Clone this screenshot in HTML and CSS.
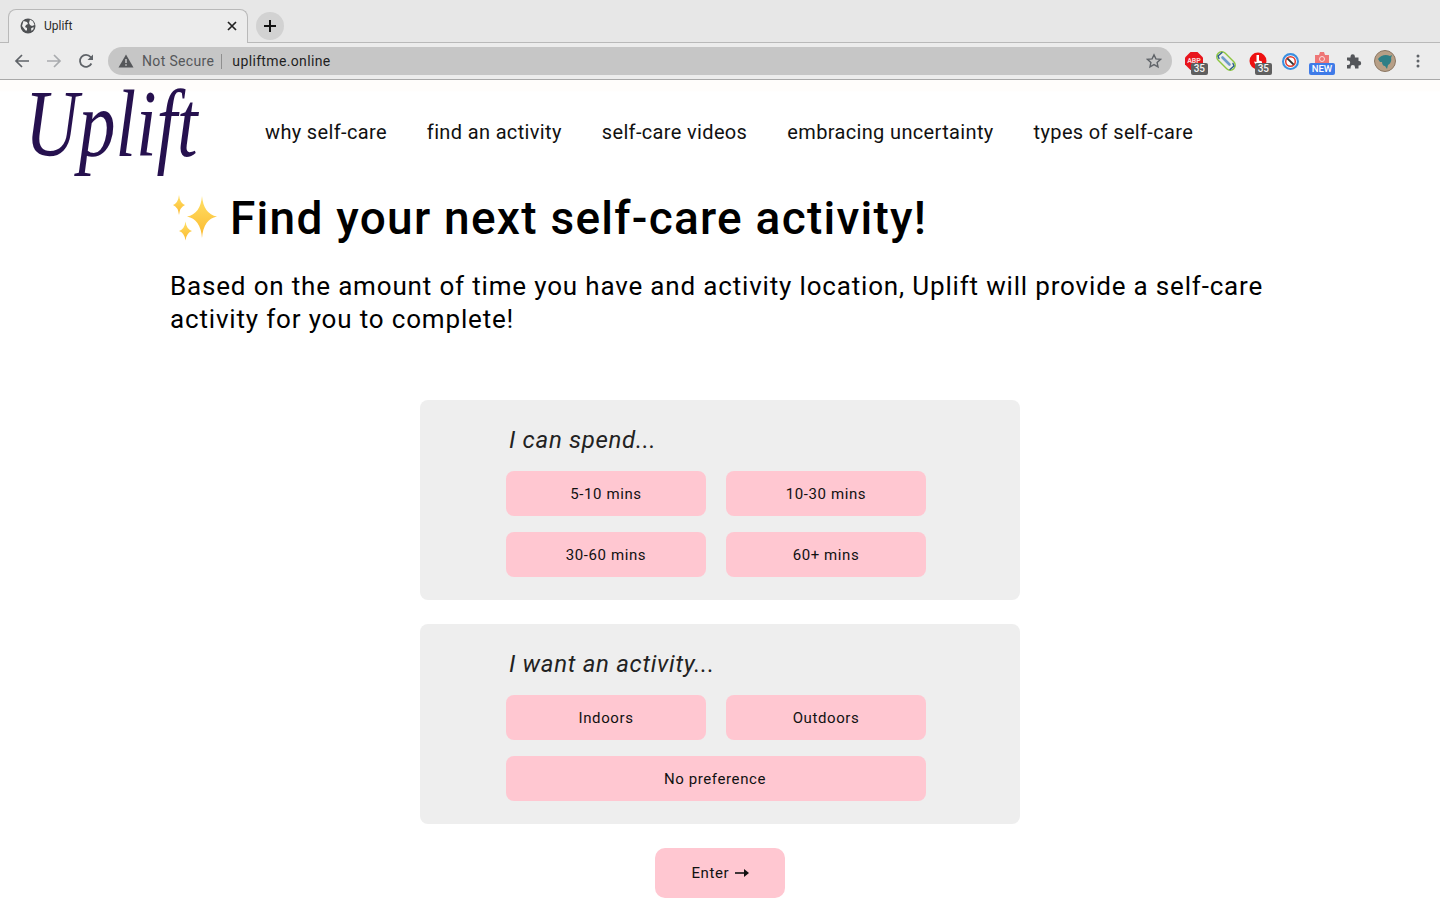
FILE: index.html
```html
<!DOCTYPE html>
<html lang="en">
<head>
    <meta charset="UTF-8">
    <meta name="viewport" content="width=device-width, initial-scale=1.0">
    <title>Uplift</title>
    <link rel="stylesheet" href="styles.css">
</head>

<body>
    <!-- browser window top -->
    <div class="tab-strip">
        <div class="tab">
            <svg class="tab-globe" width="16" height="16" viewBox="0 0 16 16">
                <circle cx="8" cy="8" r="7.500" fill="#4f5154"/>
                <path d="M3.500 3l3.500 1 1 2-2 1-1 2 2 1 0 2.500-1.500 0-3.500-4.500zM10 1.500l3 2 1.500 3.500-2.500 1-2-1-1-2zM11 10.500l2.500-1.500 0 2-2 2z" fill="#eeeeee"/>
            </svg>
            <span class="tab-title">Uplift</span>
            <svg class="tab-close" width="10" height="10" viewBox="0 0 10 10">
                <path d="M1 1l8 8M9 1l-8 8" stroke="#222" stroke-width="1.700"/>
            </svg>
        </div>
        <div class="new-tab">
            <svg width="14" height="14" viewBox="0 0 14 14">
                <path d="M7 1v12M1 7h12" stroke="#111" stroke-width="2"/>
            </svg>
        </div>
    </div>
    <div class="toolbar">
        <svg class="nav-icon" width="16" height="16" viewBox="0 0 16 16">
            <path d="M15 8H2M8 2L2 8l6 6" fill="none" stroke="#5f6368" stroke-width="1.700"/>
        </svg>
        <svg class="nav-icon" width="16" height="16" viewBox="0 0 16 16">
            <path d="M1 8h13M8 2l6 6-6 6" fill="none" stroke="#a9abae" stroke-width="1.700"/>
        </svg>
        <svg class="nav-icon" width="16" height="16" viewBox="0 0 16 16">
            <path d="M13.400 10.500A6 6 0 1 1 12.600 4L14 5.600" fill="none" stroke="#5f6368" stroke-width="1.800"/>
            <path d="M15 1.500V7H9.500z" fill="#5f6368"/>
        </svg>
        <div class="omnibox">
            <svg class="warn" width="16" height="14" viewBox="0 0 16 14">
                <path d="M8 0.500L15.500 13.500H0.500z" fill="#55575a"/>
                <path d="M8 5v4M8 10.200v1.600" stroke="#c6c6c6" stroke-width="1.500"/>
            </svg>
            <span class="not-secure">Not Secure</span>
            <span class="url">upliftme.online</span>
            <svg class="star" width="16" height="16" viewBox="0 0 16 16">
                <path d="M8 1.800l1.900 4.100 4.500.5-3.300 3 .9 4.400L8 11.600l-4 2.200.9-4.400-3.300-3 4.500-.5z" fill="none" stroke="#5f6368" stroke-width="1.400"/>
            </svg>
        </div>
        <div class="extensions">
            <div class="ext">
                <svg width="18" height="18" viewBox="0 0 18 18">
                    <path d="M5.500 0h7L18 5.500v7L12.500 18h-7L0 12.500v-7z" fill="#e8141c"/>
                    <text class="abp-text" x="9" y="11">ABP</text>
                </svg>
                <span class="ext-badge">35</span>
            </div>
            <div class="ext">
                <svg width="20" height="20" viewBox="0 0 20 20">
                    <g fill="none" stroke-linecap="round">
                        <rect x="-1" y="5" width="22" height="10" rx="5" stroke="#8cc63f" stroke-width="1.400" transform="rotate(45 10 10)"/>
                        <path d="M6.500 6.500l7 7" stroke="#6d9ccb" stroke-width="2.600"/>
                        <path d="M6 1.500L2 5l1 2.500M14 18.500l4-3.500-1-2.500" stroke="#2c5f8a" stroke-width="1.400"/>
                    </g>
                </svg>
            </div>
            <div class="ext">
                <svg width="18" height="18" viewBox="0 0 18 18">
                    <circle cx="9" cy="9" r="8.500" fill="#ee1111"/>
                    <path d="M7.500 3h2.500v5.500l3 1v4.500h-6l-2-4.500 2.500 .5z" fill="#fff"/>
                </svg>
                <span class="ext-badge">35</span>
            </div>
            <div class="ext">
                <svg width="17" height="17" viewBox="0 0 16 16">
                    <circle cx="8" cy="8" r="7" fill="#fff" stroke="#3b8fe0" stroke-width="2"/>
                    <circle cx="8" cy="8" r="4.500" fill="none" stroke="#e0392b" stroke-width="1.400"/>
                    <path d="M5 5l6 6" stroke="#333" stroke-width="1.800"/>
                </svg>
            </div>
            <div class="ext">
                <svg class="cam" width="18" height="14" viewBox="0 0 18 14">
                    <path d="M2 4h4l1-3h4l1 3h4v10H2z" fill="#ee7676"/>
                    <circle cx="9" cy="8" r="2.500" fill="none" stroke="#fbdcdc" stroke-width="1"/>
                </svg>
                <span class="ext-new">NEW</span>
            </div>
            <div class="ext">
                <svg width="16" height="16" viewBox="0 0 16 16">
                    <path d="M1 4.500h3.500v-1a2.200 2.200 0 0 1 4.400 0v1H12.500V8h.5a2.200 2.200 0 0 1 0 4.400h-.5V15.500H9v-1.300a2.200 2.200 0 0 0-4.400 0v1.300H1V12h1a2.200 2.200 0 0 0 0-4.400H1z" fill="#54565a"/>
                </svg>
            </div>
            <svg class="avatar" width="22" height="22" viewBox="0 0 22 22">
                <circle cx="11" cy="11" r="10.500" fill="#b79f86" stroke="#8b7763"/>
                <path d="M4 9c3-4 8-5 12-3l2-1-1 3c1 3-1 6-3 7l-1 4-2-3c-2 0-3-2-3-4l-2 0z" fill="#2f7f86"/>
            </svg>
            <svg class="menu-dots" width="4" height="14" viewBox="0 0 4 14">
                <circle cx="2" cy="2" r="1.500" fill="#5f6368"/>
                <circle cx="2" cy="7" r="1.500" fill="#5f6368"/>
                <circle cx="2" cy="12" r="1.500" fill="#5f6368"/>
            </svg>
        </div>
    </div>

    <!-- the page itself -->
    <header class="site-header">
        <a class="logo"><span class="logo-text">Uplift</span></a>
        <nav class="site-nav">
            <a>why self-care</a>
            <a>find an activity</a>
            <a>self-care videos</a>
            <a>embracing uncertainty</a>
            <a>types of self-care</a>
        </nav>
    </header>

    <main class="content">
        <h1 class="page-title">
            <svg class="sparkles" width="48" height="46" viewBox="0 0 48 46">
                <defs>
                    <linearGradient id="spark" x1="0" y1="0" x2="0" y2="1">
                        <stop offset="0" stop-color="#ffe066"/>
                        <stop offset="1" stop-color="#fbb92f"/>
                    </linearGradient>
                </defs>
                <path d="M32 1Q33.500 19 47 21.500Q33.500 24 32 43Q30.500 24 17 21.500Q30.500 19 32 1z" fill="url(#spark)"/>
                <path d="M9 0Q9.800 8 15 10Q9.800 12 9 20Q8.200 12 3 10Q8.200 8 9 0z" fill="url(#spark)"/>
                <path d="M15.500 26.500Q16.300 34 22 36Q16.300 38 15.500 45.500Q14.700 38 9 36Q14.700 34 15.500 26.500z" fill="url(#spark)"/>
            </svg>
            <span>Find your next self-care activity!</span>
        </h1>
        <p class="intro">Based on the amount of time you have and activity location, Uplift will provide a self-care activity for you to complete!</p>

        <section class="card">
            <h2 class="card-label">I can spend...</h2>
            <div class="choices">
                <button>5-10 mins</button>
                <button>10-30 mins</button>
                <button>30-60 mins</button>
                <button>60+ mins</button>
            </div>
        </section>

        <section class="card">
            <h2 class="card-label">I want an activity...</h2>
            <div class="choices">
                <button>Indoors</button>
                <button>Outdoors</button>
                <button class="wide">No preference</button>
            </div>
        </section>

        <button class="enter-btn">Enter
            <svg class="enter-arrow" width="14" height="10" viewBox="0 0 14 10">
                <path d="M0 5h10" stroke="#111" stroke-width="1.600"/>
                <path d="M9 1l5 4-5 4z" fill="#111"/>
            </svg>
        </button>
    </main>
</body>
</html>
```

FILE: styles.css
```css
body {
    font-family: "Roboto", "Liberation Sans", sans-serif;
    margin: 0;
    background: white;
    color: black;
    height: 900px;
    overflow: hidden;
}

/* browser window top */
.tab-strip {
    height: 42px;
    background: #e7e7e7;
    border-bottom: 1px solid #b9b9b9;
    display: flex;
    align-items: flex-end;
    padding-left: 8px;
    gap: 8px;
}

.tab {
    width: 240px;
    height: 34px;
    margin-bottom: -1px;
    background: #ececec;
    border: 1px solid #b9b9b9;
    border-bottom: none;
    border-radius: 8px 8px 0 0;
    display: flex;
    align-items: center;
    padding: 0 10px 2px 11px;
    box-sizing: border-box;
    font-size: 12px;
    color: #2b2b2b;
}

.tab-globe {
    margin-right: 8px;
}

.tab-title {
    flex: 1;
}

.new-tab {
    width: 28px;
    height: 28px;
    margin-bottom: 2px;
    border-radius: 50%;
    background: #d2d2d2;
    display: flex;
    align-items: center;
    justify-content: center;
}

.toolbar {
    height: 36px;
    background: #ececec;
    border-bottom: 1px solid #a9a9a9;
    display: flex;
    align-items: center;
    padding-left: 14px;
}

.nav-icon {
    margin-right: 16px;
}

.omnibox {
    width: 1064px;
    height: 28px;
    margin-left: -2px;
    border-radius: 14px;
    background: #c6c6c6;
    display: flex;
    align-items: center;
    padding: 0 10px;
    box-sizing: border-box;
    font-size: 14px;
    letter-spacing: 0.35px;
}

.warn {
    margin-right: 8px;
}

.not-secure {
    color: #55575a;
    padding-right: 7px;
    border-right: 1px solid #8f8f8f;
    line-height: 15px;
}

.url {
    flex: 1;
    color: #1f1f1f;
    padding-left: 10px;
}

.extensions {
    display: flex;
    align-items: center;
    padding-left: 6px;
}

.ext {
    width: 32px;
    height: 24px;
    display: flex;
    align-items: center;
    justify-content: center;
    position: relative;
}

.abp-text {
    font-size: 7px;
    font-weight: 700;
    fill: #f8d8d8;
    text-anchor: middle;
}

.ext-badge {
    position: absolute;
    right: 2px;
    bottom: -2px;
    background: #5f5f5f;
    color: #f2f2f2;
    font-size: 10px;
    font-weight: 500;
    line-height: 12px;
    padding: 0 3px;
    border-radius: 2px;
    letter-spacing: 0;
}

.cam {
    margin-top: -6px;
}

.ext-new {
    position: absolute;
    left: 3px;
    bottom: -2px;
    width: 26px;
    text-align: center;
    background: #3f7be8;
    color: white;
    font-size: 9.500px;
    font-weight: 500;
    line-height: 12px;
    border-radius: 2px;
}

.avatar {
    margin-left: 4px;
}

.menu-dots {
    margin-left: 20px;
}

/* page */
.site-header {
    height: 100px;
    display: flex;
    align-items: flex-start;
    padding-left: 30px;
    background: linear-gradient(#fffdfb 0, #fffdfb 10px, white 12px);
}

.logo {
    width: 170px;
    height: 100px;
    color: #26114f;
}

.logo-text {
    display: block;
    margin-left: -5px;
    font-family: "Liberation Serif", serif;
    font-style: italic;
    font-size: 74px;
    line-height: 92px;
    transform: scaleY(1.300);
    transform-origin: 0 54px;
}

.site-nav {
    display: flex;
    gap: 40px;
    margin-left: 65px;
    padding-top: 39px;
    font-size: 20px;
    line-height: 26px;
    letter-spacing: 0.35px;
    color: #111;
}

.content {
    padding: 12px 170px 0;
}

.page-title {
    margin: 0;
    display: flex;
    align-items: center;
    gap: 12px;
    font-size: 46px;
    font-weight: 500;
    line-height: 52px;
    letter-spacing: 1.250px;
}

.sparkles {
    flex: none;
}

.intro {
    margin: 26px 0 64px;
    font-size: 26px;
    line-height: 33px;
    letter-spacing: 0.83px;
}

.card {
    width: 600px;
    height: 200px;
    margin: 0 auto 24px;
    padding: 24px 94px 0 86px;
    box-sizing: border-box;
    background: #eeeeee;
    border-radius: 8px;
}

.card-label {
    margin: 0 0 15px 3px;
    font-size: 24px;
    font-style: italic;
    font-weight: 400;
    line-height: 32px;
    letter-spacing: 0.7px;
    color: #222;
}

.choices {
    display: grid;
    grid-template-columns: 200px 200px;
    gap: 16px 20px;
}

.choices button {
    height: 45px;
}

button {
    font-family: inherit;
    font-size: 15px;
    letter-spacing: 0.6px;
    color: #111;
    background: #ffc7d1;
    border: none;
    border-radius: 8px;
    cursor: pointer;
}

.choices .wide {
    grid-column: 1 / 3;
    padding-right: 8px;
}

.enter-btn {
    display: block;
    width: 130px;
    height: 50px;
    margin: 0 auto;
    border-radius: 10px;
}

.enter-arrow {
    margin-left: 1px;
}
```
